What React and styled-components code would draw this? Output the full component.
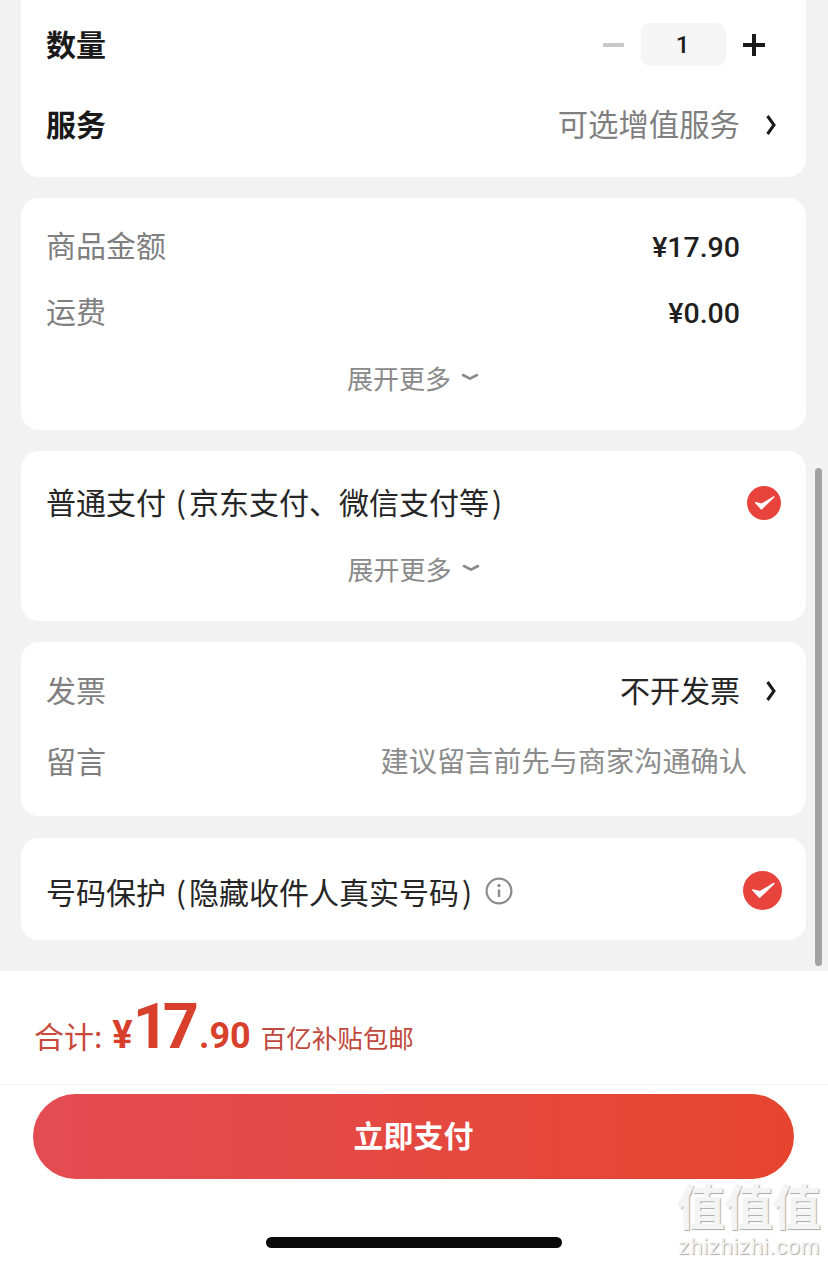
import React from 'react';
import styled, { createGlobalStyle } from 'styled-components';

const GlobalStyle = createGlobalStyle`
  html, body {
    margin: 0;
    padding: 0;
    background: #f2f2f2;
    overflow: hidden;
  }
  * {
    box-sizing: border-box;
  }
`;

function Check({ size }) {
  return (
    <CheckIcon width={size} height={size} viewBox="0 0 34 34">
      <circle cx="17" cy="17" r="17" fill="#e8433c" />
      <path d="M8.5 16.5 L14.5 23 L27 10.8 L14.8 18 Z" fill="#fff" stroke="#fff" strokeWidth="1.2" strokeLinejoin="round" />
    </CheckIcon>
  );
}

function Chevron() {
  return (
    <ChevronIcon width="12" height="22" viewBox="0 0 12 22">
      <path d="M2.5 2 L9 11 L2.5 20" fill="none" stroke="#1a1a1a" strokeWidth="3" />
    </ChevronIcon>
  );
}

function More() {
  return (
    <MoreRow>
      展开更多
      <svg width="18" height="8" viewBox="0 0 18 8">
        <path d="M2 2 L9 5.6 L16 2" fill="none" stroke="#8a8a8a" strokeWidth="2.6" strokeLinecap="round" strokeLinejoin="round" />
      </svg>
    </MoreRow>
  );
}

function App() {
  return (
    <Page>
      <GlobalStyle />
      <Content>
        <TopCard>
          <QtyRow>
            <BoldLabel>数量</BoldLabel>
            <Stepper>
              <Minus />
              <QtyBox>1</QtyBox>
              <Plus />
            </Stepper>
          </QtyRow>
          <ServiceRow>
            <BoldLabel>服务</BoldLabel>
            <RightValue>
              <GreyValue>可选增值服务</GreyValue>
              <Chevron />
            </RightValue>
          </ServiceRow>
        </TopCard>

        <PriceCard>
          <PriceRow>
            <GreyLabel>商品金额</GreyLabel>
            <Price>¥17.90</Price>
          </PriceRow>
          <PriceRow>
            <GreyLabel>运费</GreyLabel>
            <Price>¥0.00</Price>
          </PriceRow>
          <More />
        </PriceCard>

        <PayCard>
          <PayRow>
            <DarkLabel>
              普通支付<OpenParen>(</OpenParen>京东支付、微信支付等<CloseParen>)</CloseParen>
            </DarkLabel>
            <Check size={34} />
          </PayRow>
          <More />
        </PayCard>

        <InvoiceCard>
          <InvoiceRow>
            <GreyLabel>发票</GreyLabel>
            <RightValue>
              <DarkLabel>不开发票</DarkLabel>
              <Chevron />
            </RightValue>
          </InvoiceRow>
          <NoteRow>
            <GreyLabel>留言</GreyLabel>
            <Hint>建议留言前先与商家沟通确认</Hint>
          </NoteRow>
        </InvoiceCard>

        <ProtectCard>
          <ProtectLeft>
            <DarkLabel>
              号码保护<OpenParen>(</OpenParen>隐藏收件人真实号码<CloseParen>)</CloseParen>
            </DarkLabel>
            <svg width="28" height="28" viewBox="0 0 28 28">
              <circle cx="14" cy="14" r="12.4" fill="none" stroke="#8c8c8c" strokeWidth="2.2" />
              <circle cx="14" cy="8.6" r="1.7" fill="#8c8c8c" />
              <path d="M14 12.5 V20" stroke="#8c8c8c" strokeWidth="2.4" />
            </svg>
          </ProtectLeft>
          <Check size={39} />
        </ProtectCard>
      </Content>

      <Footer>
        <TotalRow>
          <TotalLabel>合计:</TotalLabel>
          <Yen>¥</Yen>
          <BigNum>17</BigNum>
          <Decimal>.90</Decimal>
          <Note>百亿补贴包邮</Note>
        </TotalRow>
        <ButtonWrap>
          <PayButton>立即支付</PayButton>
        </ButtonWrap>
        <HomeBar />
      </Footer>

      <ScrollThumb />
      <Watermark>
        <MarkGlyphs>值值值</MarkGlyphs>
        <MarkUrl>zhizhizhi.com</MarkUrl>
      </Watermark>
    </Page>
  );
}

const font = `"Noto Sans CJK SC", "Liberation Sans", sans-serif`;
const numberFont = `Roboto, "Liberation Sans", sans-serif`;

const Page = styled.div`
  position: relative;
  width: 828px;
  height: 1265px;
  display: flex;
  flex-direction: column;
  overflow: hidden;
  background: #f2f2f2;
  font-family: ${font};
`;

const Content = styled.main`
  height: 971px;
  padding: 0 22px 0 21px;
  display: flex;
  flex-direction: column;
  gap: 21px;
`;

const Card = styled.section`
  background: #fff;
  border-radius: 18px;
  padding: 0 26px 0 25px;
`;

const TopCard = styled(Card)`
  height: 177px;
  border-radius: 0 0 18px 18px;
  padding-right: 29px;
`;

const PriceCard = styled(Card)`
  height: 232px;
  padding-top: 15px;
`;

const PayCard = styled(Card)`
  height: 170px;
  padding-top: 19px;
  padding-right: 25px;
`;

const InvoiceCard = styled(Card)`
  height: 174px;
  padding-top: 13px;
  padding-right: 29px;
`;

const ProtectCard = styled(Card)`
  height: 102px;
  margin-top: 1px;
  padding-top: 2px;
  padding-right: 24px;
  display: flex;
  align-items: center;
  justify-content: space-between;
`;

const Row = styled.div`
  display: flex;
  align-items: center;
  justify-content: space-between;
`;

const QtyRow = styled(Row)`
  height: 89px;
  padding-right: 12px;
`;

const ServiceRow = styled(Row)`
  height: 72px;
`;

const PriceRow = styled(Row)`
  height: 66px;
  padding-right: 40px;
`;

const PayRow = styled(Row)`
  height: 66px;
`;

const InvoiceRow = styled(Row)`
  height: 72px;
`;

const NoteRow = styled(Row)`
  height: 70px;
  padding-right: 30px;
`;

const ProtectLeft = styled.div`
  display: flex;
  align-items: center;
  gap: 11px;
  padding-top: 6px;
  margin-right: auto;

  svg {
    margin-bottom: 4px;
  }
`;

const BoldLabel = styled.span`
  font-size: 30px;
  font-weight: 700;
  color: #1a1a1a;
  line-height: 40px;
  padding-bottom: 4px;
`;

const GreyLabel = styled.span`
  font-size: 30px;
  color: #7f7f7f;
  line-height: 40px;
  padding-bottom: 4px;
`;

const DarkLabel = styled.span`
  font-size: 30px;
  color: #262626;
  line-height: 40px;
  padding-bottom: 4px;
`;

const OpenParen = styled.span`
  display: inline-block;
  width: 23px;
  text-align: right;
  padding-right: 3px;
`;

const CloseParen = styled.span`
  display: inline-block;
  width: 15px;
  padding-left: 3px;
`;

const GreyValue = styled.span`
  font-size: 30.4px;
  color: #7f7f7f;
  line-height: 40px;
  padding-bottom: 4px;
`;

const Hint = styled.span`
  font-size: 28.2px;
  color: #8c8c8c;
  line-height: 40px;
  padding-bottom: 4px;
`;

const RightValue = styled.div`
  display: flex;
  align-items: center;
  gap: 25px;
`;

const ChevronIcon = styled.svg`
  display: block;
`;

const CheckIcon = styled.svg`
  display: block;
  flex: none;
`;

const Stepper = styled.div`
  display: flex;
  align-items: center;
`;

const Minus = styled.span`
  width: 21px;
  height: 4px;
  margin-right: 17px;
  border-radius: 1px;
  background: #c8c8c8;
`;

const QtyBox = styled.span`
  width: 85px;
  height: 43px;
  border-radius: 9px;
  background: #f5f5f5;
  display: flex;
  align-items: center;
  justify-content: center;
  font-family: ${numberFont};
  font-weight: 500;
  font-size: 24px;
  color: #1a1a1a;
  padding-right: 2px;
`;

const Plus = styled.span`
  width: 22px;
  height: 22px;
  margin-left: 17px;
  background:
    linear-gradient(#1a1a1a, #1a1a1a) center / 22px 4px no-repeat,
    linear-gradient(#1a1a1a, #1a1a1a) center / 4px 22px no-repeat;
`;

const Price = styled.span`
  font-family: ${numberFont};
  font-size: 28.5px;
  font-weight: 500;
  color: #1f1f1f;
  padding-top: 2px;
`;

const MoreRow = styled.div`
  display: flex;
  align-items: center;
  justify-content: center;
  gap: 10px;
  height: 66px;
  margin-top: -1px;
  font-size: 26px;
  color: #8a8a8a;
`;

const Footer = styled.footer`
  flex: 1;
  background: #fff;
  display: flex;
  flex-direction: column;
`;

const TotalRow = styled.div`
  height: 114px;
  padding: 21px 0 0 34px;
  display: flex;
  align-items: baseline;
  border-bottom: 1px solid #f4f4f4;
  color: #d8402c;
`;

const TotalLabel = styled.span`
  font-size: 30px;
  color: #c9493c;
  margin-right: 10px;
`;

const Yen = styled.span`
  font-family: ${numberFont};
  font-size: 38px;
  font-weight: 700;
  margin-right: 2px;
`;

const BigNum = styled.span`
  font-family: ${numberFont};
  font-size: 63px;
  font-weight: 700;
  line-height: 70px;
  letter-spacing: -6px;
  margin-left: -2px;
`;

const Decimal = styled.span`
  font-family: ${numberFont};
  font-size: 36px;
  font-weight: 700;
  margin: 0 10px 0 6px;
`;

const Note = styled.span`
  font-size: 25.5px;
  color: #c0483c;
`;

const ButtonWrap = styled.div`
  padding: 9px 34px 0 33px;
`;

const PayButton = styled.div`
  height: 85px;
  border-radius: 43px;
  background: linear-gradient(90deg, #e34c52 0%, #e5452f 100%);
  color: #fff;
  font-size: 30px;
  font-weight: 700;
  padding-bottom: 5px;
  display: flex;
  align-items: center;
  justify-content: center;
`;

const HomeBar = styled.div`
  width: 296px;
  height: 11px;
  margin: 58px 0 0 266px;
  border-radius: 6px;
  background: #0a0a0a;
`;

const ScrollThumb = styled.div`
  position: absolute;
  left: 815px;
  top: 468px;
  width: 7px;
  height: 498px;
  border-radius: 4px;
  background: #a3a3a3;
`;

const Watermark = styled.div`
  position: absolute;
  left: 677px;
  top: 1182px;
  width: 144px;
  color: #f4f4f4;
  text-align: center;
  text-shadow: 1px 1px 1px #a8a8a8;
`;

const MarkGlyphs = styled.div`
  font-family: "Liberation Sans", "Noto Sans CJK SC", sans-serif;
  font-size: 48px;
  line-height: 53px;
  font-weight: 700;
  white-space: nowrap;
`;

const MarkUrl = styled.div`
  font-family: "Liberation Sans", sans-serif;
  font-size: 22.5px;
  line-height: 24px;
  letter-spacing: 0.5px;
  white-space: nowrap;
`;

export default App;
